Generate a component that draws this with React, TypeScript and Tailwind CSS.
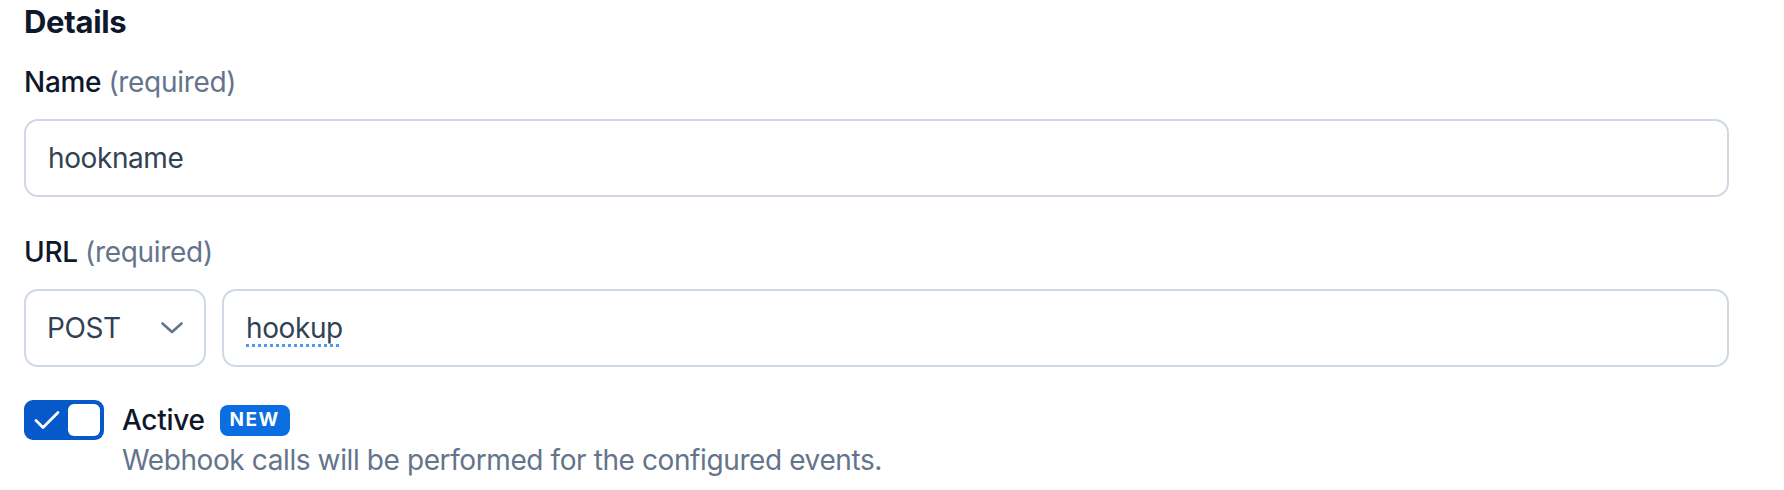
import { useState } from 'react';

const font = { fontFamily: 'Inter, "Noto Sans", sans-serif' };

export default function App() {
  const [name, setName] = useState('hookname');
  const [url, setUrl] = useState('hookup');
  const [active, setActive] = useState(true);

  return (
    <div className="min-h-screen bg-white pl-6 pr-[55px] pt-[2px] text-[#0f172a]" style={font}>
      <h2 className="text-[31px] leading-[40px] font-bold tracking-[-0.3px]">Details</h2>

      {/* Name */}
      <label className="mt-[20px] block text-[28px] leading-[40px] font-medium tracking-[-0.3px]">
        Name <span className="font-normal text-[#64748b]">(required)</span>
      </label>
      <input
        value={name}
        onChange={(e) => setName(e.target.value)}
        className="mt-[17px] block h-[78px] w-full rounded-[14px] border-2 border-[#cfd9e3] bg-white px-[22px] text-[28px] tracking-[-0.4px] text-[#334155] outline-none"
        style={font}
      />

      {/* URL */}
      <label className="mt-[35px] block text-[28px] leading-[40px] font-medium tracking-[-0.3px]">
        URL <span className="font-normal text-[#64748b]">(required)</span>
      </label>
      <div className="mt-[17px] flex gap-4">
        <button className="flex h-[78px] w-[182px] shrink-0 items-center justify-between rounded-[14px] border-2 border-[#cfd9e3] bg-white pl-[21px] pr-[21px] text-[28px] tracking-[-0.4px] text-[#334155]">
          POST
          <svg width="22" height="12" viewBox="0 0 22 12" fill="none">
            <path d="M1.5 1.5L11 10L20.5 1.5" stroke="#64748b" strokeWidth="2.6" strokeLinecap="round" strokeLinejoin="round" />
          </svg>
        </button>
        <div className="relative min-w-0 flex-1">
          <input
            value={url}
            onChange={(e) => setUrl(e.target.value)}
            spellCheck={false}
            className="block h-[78px] w-full rounded-[14px] border-2 border-[#cfd9e3] bg-white px-[22px] text-[28px] tracking-[-0.4px] text-[#334155] outline-none"
            style={font}
          />
          {/* spellcheck marker */}
          <span className="pointer-events-none absolute left-[24px] top-0 flex h-[78px] items-center text-[28px] tracking-[-0.4px] text-transparent underline decoration-dotted decoration-[#4a9af7] decoration-[3px] underline-offset-[6px]">
            {url}
          </span>
        </div>
      </div>

      {/* Active */}
      <div className="mt-[33px] flex items-start gap-[18px]">
        <button
          onClick={() => setActive(!active)}
          className="flex h-[40px] w-[80px] shrink-0 items-center justify-between rounded-[9px] bg-[#0559c9] p-[4px]"
        >
          <svg width="26" height="20" viewBox="0 0 26 20" fill="none" className="ml-[6px]">
            <path d="M2 10.5L9 17.5L24 2.5" stroke="white" strokeWidth="2.8" strokeLinecap="round" strokeLinejoin="round" />
          </svg>
          <span className="h-[32px] w-[32px] rounded-[6px] bg-white" />
        </button>
        <div>
          <div className="flex items-center">
            <span className="text-[28px] leading-[40px] font-medium tracking-[-0.3px]">Active</span>
            <span className="ml-[15px] flex h-[31px] items-center rounded-[8px] bg-[#0a6ee1] px-[10px] text-[19px] font-bold tracking-[1.5px] text-white">
              NEW
            </span>
          </div>
          <p className="text-[28px] leading-[40px] tracking-[-0.4px] text-[#64748b]">
            Webhook calls will be performed for the configured events.
          </p>
        </div>
      </div>
    </div>
  );
}
